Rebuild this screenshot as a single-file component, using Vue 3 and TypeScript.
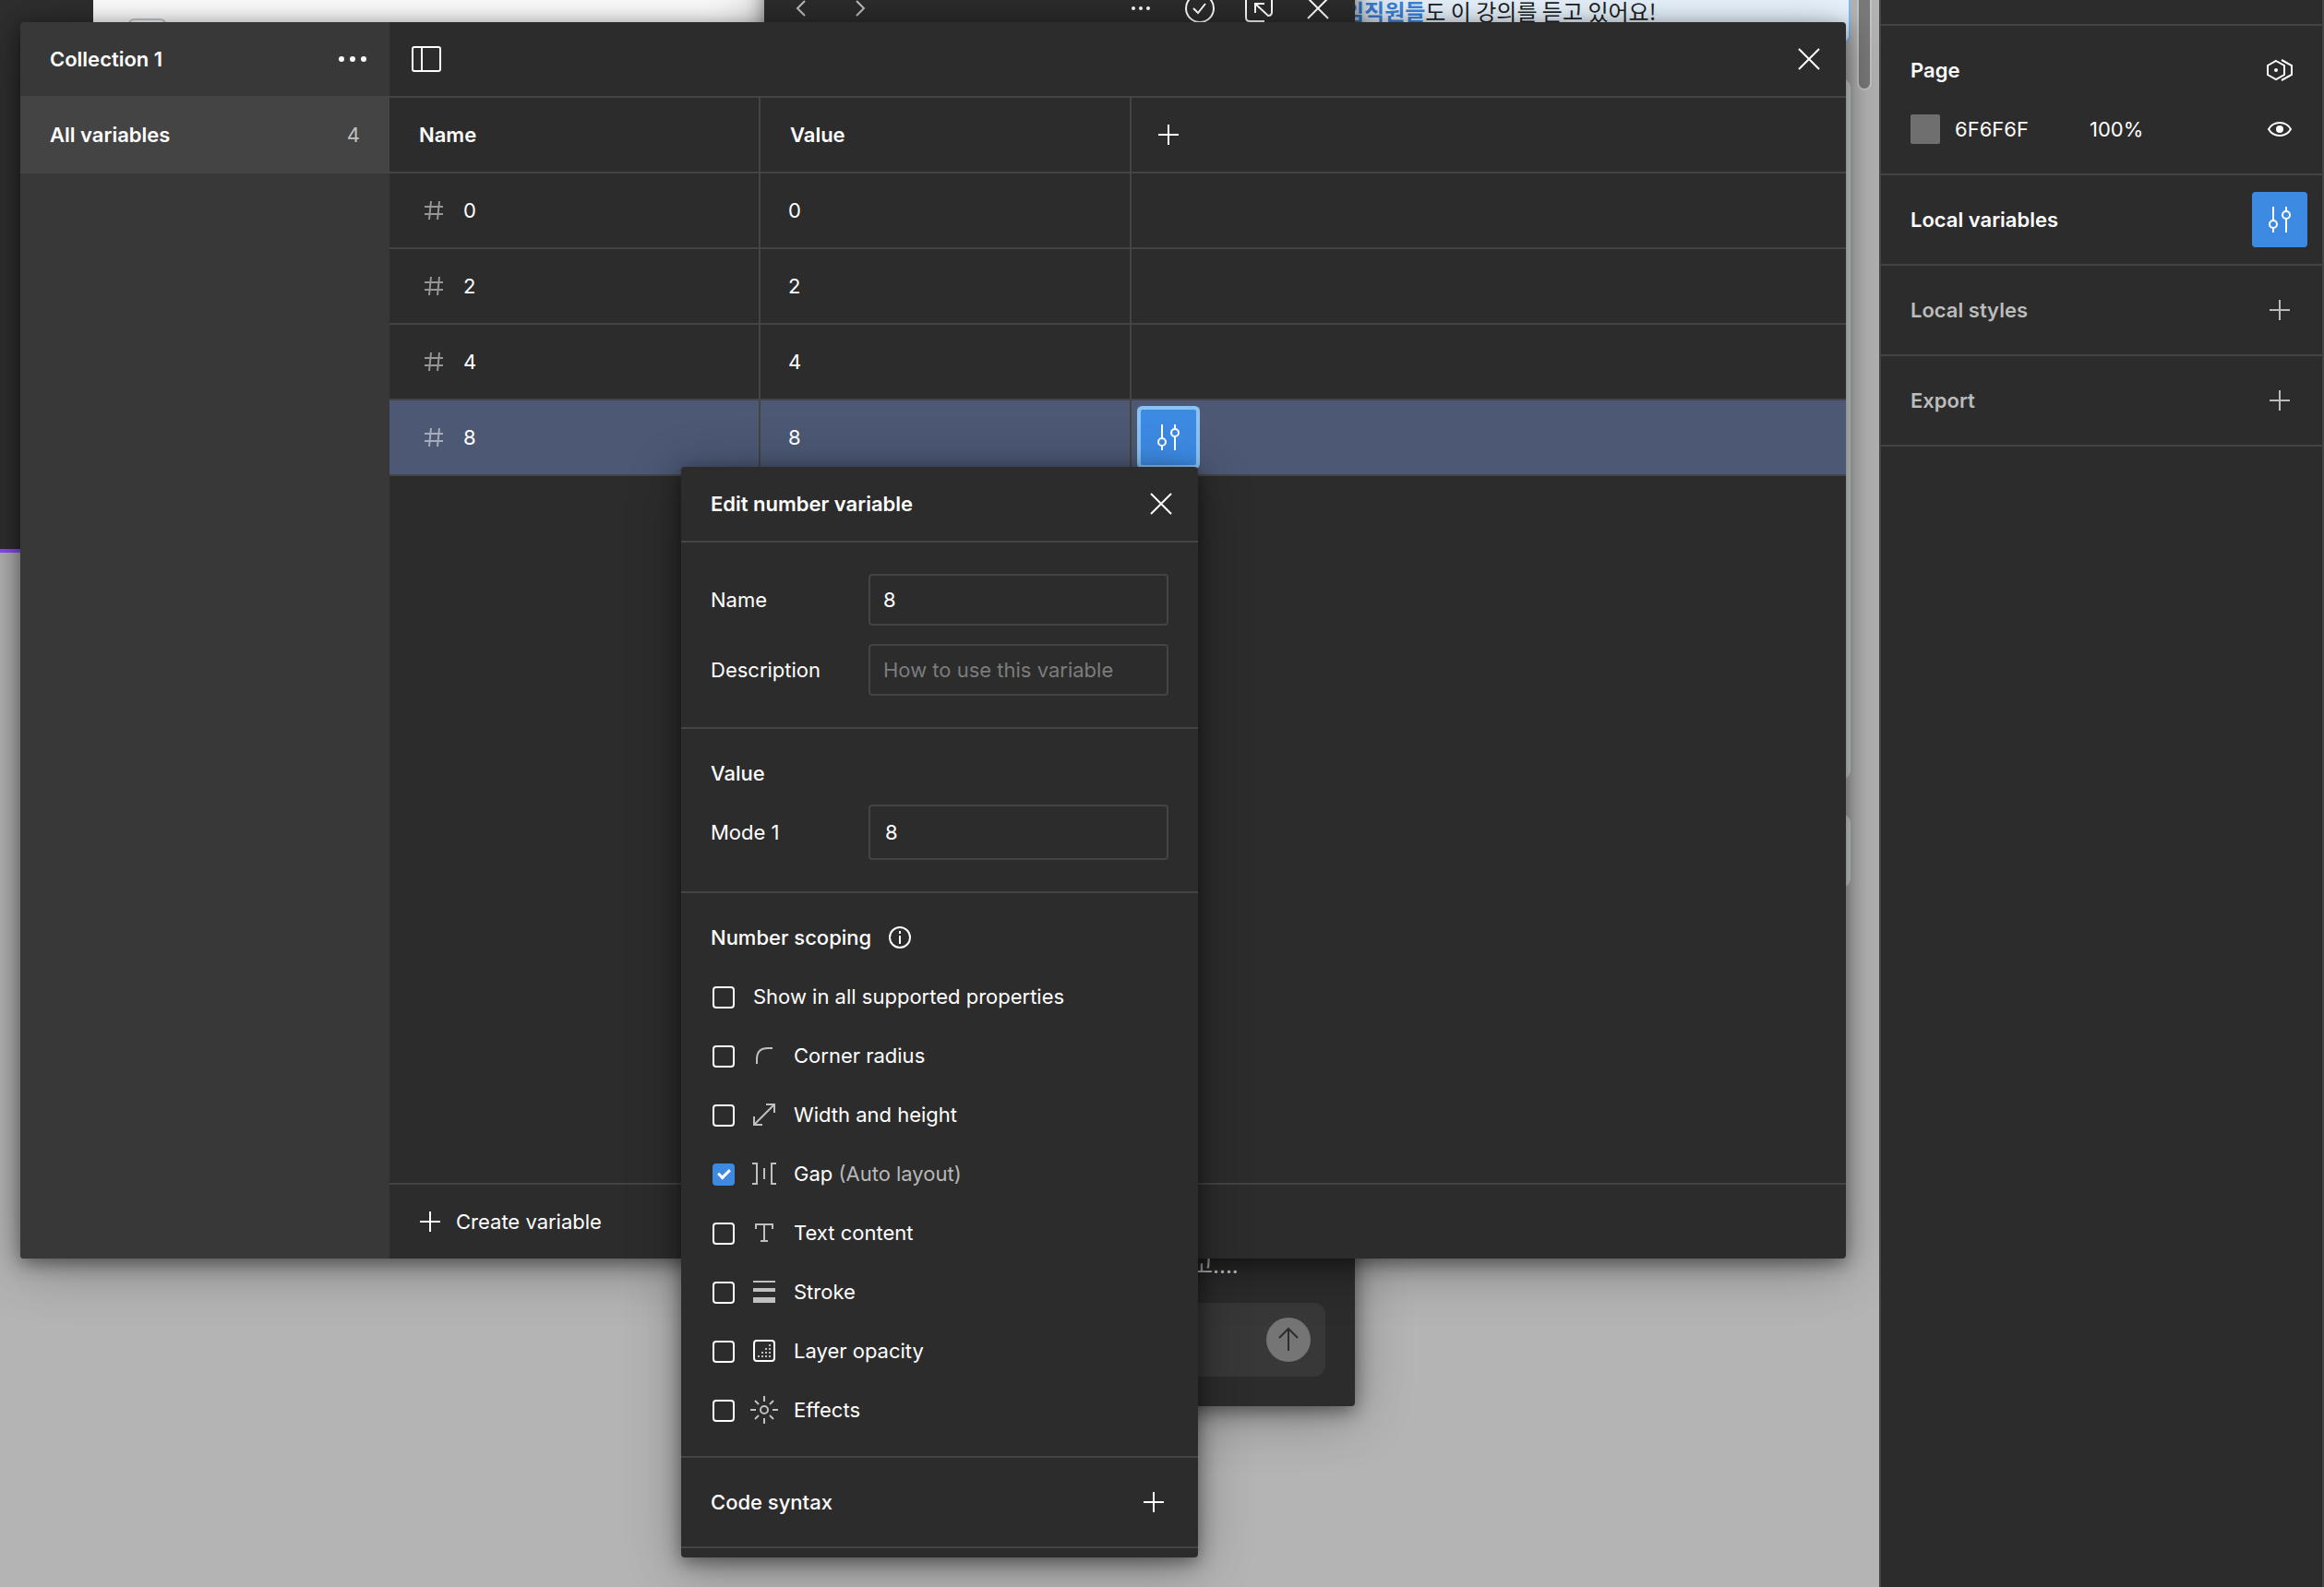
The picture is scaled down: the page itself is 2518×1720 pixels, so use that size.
<script setup lang="ts">
import { ref } from 'vue'

interface NumberVariable {
  name: string
  value: string
}

interface Scope {
  id: string
  label: string
  hint?: string
  icon?: string
  checked: boolean
}

const variables: NumberVariable[] = [
  { name: '0', value: '0' },
  { name: '2', value: '2' },
  { name: '4', value: '4' },
  { name: '8', value: '8' },
]
const selected = ref('8')
const editName = ref('8')
const editDescription = ref('')
const editValue = ref('8')

const scopes = ref<Scope[]>([
  { id: 'all', label: 'Show in all supported properties', checked: false },
  { id: 'radius', label: 'Corner radius', icon: 'radius', checked: false },
  { id: 'size', label: 'Width and height', icon: 'size', checked: false },
  { id: 'gap', label: 'Gap', hint: '(Auto layout)', icon: 'gap', checked: true },
  { id: 'text', label: 'Text content', icon: 'text', checked: false },
  { id: 'stroke', label: 'Stroke', icon: 'stroke', checked: false },
  { id: 'opacity', label: 'Layer opacity', icon: 'opacity', checked: false },
  { id: 'effects', label: 'Effects', icon: 'effects', checked: false },
])
</script>

<template>
  <div class="app">
    <main class="canvas">
      <div class="frame-dark"></div>
      <div class="frame-white"><span class="frame-chip"></span></div>

      <div class="card card-notice">
        <p><strong>임직원들</strong>도 이 강의를 듣고 있어요!</p>
      </div>
      <div class="card card-long"></div>
      <div class="card card-short"></div>
      <div class="scroll-thumb"></div>

      <section class="chat" aria-label="Chat">
        <header class="chat-head">
          <button type="button" aria-label="Back">
            <svg class="icon dim" viewBox="0 0 32 32"><path d="M20 8l-8 8 8 8" /></svg>
          </button>
          <button type="button" aria-label="Forward">
            <svg class="icon dim" viewBox="0 0 32 32"><path d="M12 8l8 8-8 8" /></svg>
          </button>
          <span class="spacer"></span>
          <button type="button" aria-label="More">
            <svg class="icon solid" viewBox="0 0 32 32"><circle cx="8" cy="16" r="2" /><circle cx="16" cy="16" r="2" /><circle cx="24" cy="16" r="2" /></svg>
          </button>
          <button type="button" aria-label="Resolve">
            <svg class="icon" viewBox="0 0 32 32"><circle cx="16" cy="16" r="15" /><path d="M9 16l5 5 8-10" /></svg>
          </button>
          <button type="button" aria-label="Open">
            <svg class="icon" viewBox="0 0 32 32"><path d="M22 30H6q-4 0-4-4V6q0-4 4-4h20q4 0 4 4v14q0 4-4 4L12 11M12 21V11h10" /></svg>
          </button>
          <button type="button" aria-label="Close chat">
            <svg class="icon" viewBox="0 0 32 32"><path d="M5 5l22 22M27 5L5 27" /></svg>
          </button>
        </header>
        <p class="chat-line">고....</p>
        <div class="composer">
          <button type="button" class="send" aria-label="Send">
            <svg viewBox="0 0 48 48"><path d="M24 36V12M14 22l10-10 10 10" /></svg>
          </button>
        </div>
      </section>

      <section class="window" aria-label="Local variables">
        <aside class="side">
          <header class="side-head">
            <h2>Collection 1</h2>
            <button type="button" aria-label="Collection options">
              <svg class="icon solid" viewBox="0 0 32 32"><circle cx="4" cy="16" r="3" /><circle cx="16" cy="16" r="3" /><circle cx="28" cy="16" r="3" /></svg>
            </button>
          </header>
          <button type="button" class="side-item">
            <span>All variables</span><span class="count">4</span>
          </button>
        </aside>

        <div class="main">
          <header class="main-head">
            <button type="button" aria-label="Toggle sidebar">
              <svg class="icon" viewBox="0 0 32 32"><rect x="1" y="3" width="30" height="26" rx="2" /><path d="M11 3v26" /></svg>
            </button>
            <button type="button" aria-label="Close">
              <svg class="icon" viewBox="0 0 32 32"><path d="M5 5l22 22M27 5L5 27" /></svg>
            </button>
          </header>

          <table class="vars">
            <colgroup><col class="col" /><col class="col" /><col /></colgroup>
            <thead>
              <tr>
                <th>Name</th>
                <th>Value</th>
                <th class="add">
                  <button type="button" aria-label="Add mode">
                    <svg class="icon" viewBox="0 0 32 32"><path d="M16 5v22M5 16h22" /></svg>
                  </button>
                </th>
              </tr>
            </thead>
            <tbody>
              <tr v-for="v in variables" :key="v.name" :class="{ selected: v.name === selected }">
                <td>
                  <div class="name">
                    <svg class="icon hash" viewBox="0 0 32 32"><path d="M13 6l-2 20M22 6l-2 20M6 12h20M6 20h20" /></svg>
                    <span>{{ v.name }}</span>
                  </div>
                </td>
                <td class="value">{{ v.value }}</td>
                <td class="action">
                  <button v-if="v.name === selected" type="button" class="tune focused" aria-label="Edit variable">
                    <svg class="icon" viewBox="0 0 32 32"><path d="M9 2v15M9 25v5M23 2v5M23 15v15" /><circle cx="9" cy="21" r="4" /><circle cx="23" cy="11" r="4" /></svg>
                  </button>
                </td>
              </tr>
            </tbody>
          </table>

          <footer class="main-foot">
            <button type="button" class="create">
              <svg class="icon" viewBox="0 0 32 32"><path d="M16 5v22M5 16h22" /></svg>
              Create variable
            </button>
          </footer>
        </div>
      </section>

      <form class="dialog" aria-label="Edit number variable" @submit.prevent>
        <header class="dialog-head">
          <h2>Edit number variable</h2>
          <button type="button" aria-label="Close dialog">
            <svg class="icon" viewBox="0 0 32 32"><path d="M5 5l22 22M27 5L5 27" /></svg>
          </button>
        </header>

        <div class="block fields">
          <div class="field">
            <label for="var-name">Name</label>
            <input id="var-name" v-model="editName" type="text" />
          </div>
          <div class="field">
            <label for="var-desc">Description</label>
            <input id="var-desc" v-model="editDescription" type="text" placeholder="How to use this variable" />
          </div>
        </div>

        <div class="block values">
          <h3>Value</h3>
          <div class="field mode">
            <label for="var-mode">Mode 1</label>
            <input id="var-mode" v-model="editValue" type="text" />
          </div>
        </div>

        <div class="block scoping">
          <h3>
            Number scoping
            <svg class="icon" viewBox="0 0 32 32"><circle cx="16" cy="16" r="11" /><path d="M16 14v9M16 9v3" /></svg>
          </h3>
          <label v-for="s in scopes" :key="s.id" class="scope" :class="{ plain: !s.icon }">
            <input v-model="s.checked" type="checkbox" />
            <svg v-if="s.icon === 'radius'" class="icon muted" viewBox="0 0 32 32"><path d="M8 25v-5Q8 8 20 8h5" /></svg>
            <svg v-else-if="s.icon === 'size'" class="icon muted" viewBox="0 0 32 32"><path d="M5 27L27 5M18 5h9v9M5 18v9h9" /></svg>
            <svg v-else-if="s.icon === 'gap'" class="icon muted" viewBox="0 0 32 32"><path d="M3 5h5v22H3M29 5h-5v22h5M16 10v12" /></svg>
            <svg v-else-if="s.icon === 'text'" class="icon muted" viewBox="0 0 32 32"><path d="M7 12V7h18v5M16 7v18M12 25h8" /></svg>
            <svg v-else-if="s.icon === 'stroke'" class="icon bars" viewBox="0 0 32 32"><path d="M4 4h24v2H4zM4 12h24v4H4zM4 22h24v6H4z" /></svg>
            <svg v-else-if="s.icon === 'opacity'" class="icon" viewBox="0 0 32 32">
              <rect x="5" y="5" width="22" height="22" rx="3" />
              <path class="dots" d="M9 21h2v2h-2zM13 21h2v2h-2zM17 21h2v2h-2zM21 21h2v2h-2zM13 17h2v2h-2zM17 17h2v2h-2zM21 17h2v2h-2zM17 13h2v2h-2zM21 13h2v2h-2zM21 9h2v2h-2z" />
            </svg>
            <svg v-else-if="s.icon === 'effects'" class="icon muted" viewBox="0 0 32 32"><circle cx="16" cy="16" r="4" /><path d="M16 1v6M16 25v6M1 16h6M25 16h6M6 6l4 4M22 22l4 4M26 6l-4 4M10 22l-4 4" /></svg>
            <span>{{ s.label }}<span v-if="s.hint" class="hint">{{ ' ' + s.hint }}</span></span>
          </label>
        </div>

        <div class="block syntax">
          <h3>Code syntax</h3>
          <button type="button" aria-label="Add code syntax">
            <svg class="icon" viewBox="0 0 32 32"><path d="M16 5v22M5 16h22" /></svg>
          </button>
        </div>
      </form>
    </main>

    <aside class="inspector">
      <div class="strip"></div>
      <section class="group">
        <div class="line">
          <h2>Page</h2>
          <button type="button" aria-label="Page variables">
            <svg class="icon" viewBox="0 0 32 32"><path d="M12 6l9 5v10l-9 5-9-5V11zM18 5l11 6v10l-11 6" /><circle class="dot" cx="12" cy="16" r="2" /></svg>
          </button>
        </div>
        <div class="paint">
          <span class="swatch"></span>
          <span class="hex">6F6F6F</span>
          <span class="alpha">100%</span>
          <button type="button" aria-label="Toggle visibility">
            <svg class="icon" viewBox="0 0 32 32"><path d="M4 16q4-7 12-7t12 7q-4 7-12 7T4 16z" /><circle class="dot" cx="16" cy="16" r="4" /></svg>
          </button>
        </div>
      </section>
      <section class="group line">
        <h2>Local variables</h2>
        <button type="button" class="tune" aria-label="Open local variables">
          <svg class="icon" viewBox="0 0 32 32"><path d="M9 2v15M9 25v5M23 2v5M23 15v15" /><circle cx="9" cy="21" r="4" /><circle cx="23" cy="11" r="4" /></svg>
        </button>
      </section>
      <section v-for="title in ['Local styles', 'Export']" :key="title" class="group line quiet">
        <h2>{{ title }}</h2>
        <button type="button" :aria-label="'Add ' + title">
          <svg class="icon" viewBox="0 0 32 32"><path d="M16 5v22M5 16h22" /></svg>
        </button>
      </section>
    </aside>
  </div>
</template>

<style>
body {
  margin: 0;
  background: #b2b2b2;
}
</style>

<style scoped>
* {
  box-sizing: border-box;
}

.app {
  display: grid;
  grid-template-columns: 1fr 482px;
  min-height: 100vh;
  font: 400 22px/32px Inter, 'Noto Sans CJK KR', sans-serif;
  color: #fff;
}

h2,
h3,
p {
  margin: 0;
  font-size: inherit;
}

h2 {
  font-weight: 600;
}

h3 {
  font-weight: 500;
}

button {
  display: flex;
  align-items: center;
  justify-content: center;
  padding: 0;
  border: 0;
  background: none;
  color: inherit;
  font: inherit;
}

.icon {
  display: block;
  flex: none;
  width: 32px;
  height: 32px;
  fill: none;
  stroke: currentColor;
  stroke-width: 2;
}

.solid,
.bars,
.dot {
  fill: currentColor;
  stroke: none;
}

.dim,
.muted,
.bars {
  color: #c0c0c0;
}

.dots {
  fill: #c0c0c0;
  stroke: none;
}

/* Canvas and the windows that float on it */
.canvas {
  position: relative;
  overflow: hidden;
  background: #b4b4b4;
}

.frame-dark {
  position: absolute;
  top: 0;
  left: 0;
  width: 101px;
  height: 599px;
  border-bottom: 4px solid #8b4df0;
  background: #2e2e2e;
}

.frame-white {
  position: absolute;
  top: 0;
  left: 101px;
  width: 740px;
  height: 300px;
  background: #fff;
}

.frame-chip {
  position: absolute;
  top: 20px;
  left: 37px;
  width: 43px;
  height: 40px;
  border: 2px solid #c5ccd0;
  border-radius: 8px;
}

.card {
  position: absolute;
  left: 1400px;
  right: 31px;
  background: #d8dedd;
  border-radius: 10px;
}

.card-notice {
  top: -40px;
  height: 88px;
  padding: 34px 0 0 54px;
  border: 2px solid #7dbcff;
  background: #e9f4fe;
  color: #1b1f24;
  font: 400 24px/32px 'Noto Sans CJK KR', sans-serif;
  white-space: nowrap;
}

.card-notice strong {
  color: #3b86e0;
  font-weight: 700;
}

.card-long {
  top: 85px;
  height: 760px;
}

.card-short {
  top: 882px;
  height: 80px;
}

.scroll-thumb {
  position: absolute;
  top: -20px;
  right: 8px;
  width: 16px;
  height: 118px;
  border: 2px solid #c4c4c4;
  border-radius: 8px;
  background: #7a7a7a;
}

.chat {
  position: absolute;
  top: -30px;
  bottom: 196px;
  left: 828px;
  width: 640px;
  display: flex;
  flex-direction: column;
  border-radius: 4px;
  background: #2c2c2c;
}

.chat-head {
  display: flex;
  align-items: center;
  gap: 32px;
  height: 78px;
  padding: 0 24px;
}

.spacer {
  flex: 1;
}

.chat-line {
  margin: auto 0 24px 464px;
  color: #ddd;
  font-size: 24px;
}

.composer {
  display: flex;
  align-items: center;
  justify-content: flex-end;
  height: 80px;
  margin: 0 32px 32px;
  padding: 0 16px;
  border-radius: 12px;
  background: #383838;
}

.send {
  width: 48px;
  height: 48px;
  border-radius: 50%;
  background: #757575;
}

.send svg {
  width: 48px;
  height: 48px;
  fill: none;
  stroke: #2c2c2c;
  stroke-width: 2;
}

/* Variables window */
.window {
  position: absolute;
  top: 24px;
  right: 36px;
  bottom: 356px;
  left: 22px;
  display: flex;
  overflow: hidden;
  border-radius: 4px;
  background: #2c2c2c;
}

.chat,
.window,
.dialog {
  box-shadow: 0 10px 60px rgba(0, 0, 0, 0.3), 0 5px 20px rgba(0, 0, 0, 0.45);
}

.side {
  width: 400px;
  background: #383838;
}

.side-head,
.side-item {
  display: flex;
  align-items: center;
  justify-content: space-between;
  width: 100%;
  padding: 0 24px 0 32px;
}

.side-head {
  height: 80px;
}

.side-item {
  height: 84px;
  padding-right: 32px;
  background: #444;
  font-weight: 600;
}

.count {
  color: #c0c0c0;
  font-weight: 400;
}

.main {
  flex: 1;
  display: flex;
  flex-direction: column;
}

.main-head {
  display: flex;
  align-items: center;
  justify-content: space-between;
  height: 82px;
  padding: 0 24px;
  border-bottom: 2px solid #444;
}

.vars {
  width: 100%;
  table-layout: fixed;
  border-spacing: 0;
}

.col {
  width: 402px;
}

.vars th,
.vars td {
  height: 82px;
  padding: 0 32px;
  border-bottom: 2px solid #444;
  text-align: left;
}

.vars th {
  font-weight: 600;
}

.vars th:not(:last-child),
.vars td:not(:last-child) {
  border-right: 2px solid #444;
}

.vars .add {
  padding: 0 24px;
}

.vars .value {
  padding: 0 30px;
}

.vars .action {
  padding: 0 10px;
}

.selected {
  background: #4c5874;
}

.name {
  display: flex;
  align-items: center;
  gap: 16px;
}

.hash {
  color: rgba(255, 255, 255, 0.5);
}

.tune {
  width: 60px;
  height: 60px;
  border-radius: 4px;
  background: #3d8ae3;
}

.focused {
  border-radius: 2px;
  box-shadow: 0 0 0 4px #8ac2f3;
}

.main-foot {
  display: flex;
  align-items: center;
  height: 82px;
  margin-top: auto;
  padding: 0 28px;
  border-top: 2px solid #444;
}

.create {
  gap: 12px;
}

/* Variable editor */
.dialog {
  position: absolute;
  top: 506px;
  left: 738px;
  width: 560px;
  padding-bottom: 10px;
  border-radius: 4px;
  background: #2c2c2c;
}

.dialog-head {
  display: flex;
  align-items: center;
  justify-content: space-between;
  height: 82px;
  padding: 0 24px 0 32px;
  border-bottom: 2px solid #444;
}

.block {
  display: flex;
  flex-direction: column;
  border-bottom: 2px solid #444;
}

.block h3 {
  display: flex;
  align-items: center;
  gap: 15px;
  height: 64px;
}

.fields {
  gap: 20px;
  padding: 34px 32px;
}

.values {
  gap: 2px;
  padding: 16px 32px 34px;
}

.scoping {
  padding: 16px 32px 18px;
}

.block.syntax {
  flex-direction: row;
  align-items: center;
  justify-content: space-between;
  height: 98px;
  padding: 0 32px;
}

.field {
  display: grid;
  grid-template-columns: 171px 1fr;
  align-items: center;
}

.field input {
  width: 100%;
  height: 56px;
  padding: 0 14px;
  border: 2px solid #444;
  border-radius: 4px;
  outline: none;
  background: transparent;
  color: #fff;
  font: inherit;
}

.field.mode input {
  height: 60px;
  padding: 0 16px;
}

.field input::placeholder {
  color: #7c7c7c;
}

.scope {
  display: flex;
  align-items: center;
  gap: 16px;
  height: 64px;
}

.scope.plain {
  gap: 20px;
}

.scope input {
  appearance: none;
  display: grid;
  place-items: center;
  flex: none;
  width: 24px;
  height: 24px;
  margin: 2px 0 0 2px;
  border: 2px solid #fff;
  border-radius: 4px;
}

.scope input:checked {
  border-color: #3d8ae3;
  background: #3d8ae3;
}

.scope input:checked::after {
  content: '';
  width: 10px;
  height: 5px;
  margin-bottom: 4px;
  border: solid #fff;
  border-width: 0 0 3px 3px;
  transform: rotate(-45deg);
}

.hint {
  color: #b8b8b8;
  white-space: pre;
}

/* Inspector column */
.inspector {
  border: solid #444;
  border-width: 0 2px;
  background: #2c2c2c;
}

.strip {
  height: 28px;
  border-bottom: 2px solid #444;
}

.group {
  border-bottom: 2px solid #444;
}

.line {
  display: flex;
  align-items: center;
  justify-content: space-between;
  height: 96px;
  padding: 0 16px 0 32px;
}

.group.line {
  height: 98px;
}

.line button,
.paint button {
  width: 60px;
}

.paint {
  display: flex;
  align-items: center;
  padding: 0 16px 32px 32px;
}

.swatch {
  width: 32px;
  height: 32px;
  border-radius: 2px;
  background: #6f6f6f;
}

.hex {
  width: 146px;
  margin-left: 16px;
}

.alpha {
  flex: 1;
}

.quiet {
  color: #bcbcbc;
}
</style>
